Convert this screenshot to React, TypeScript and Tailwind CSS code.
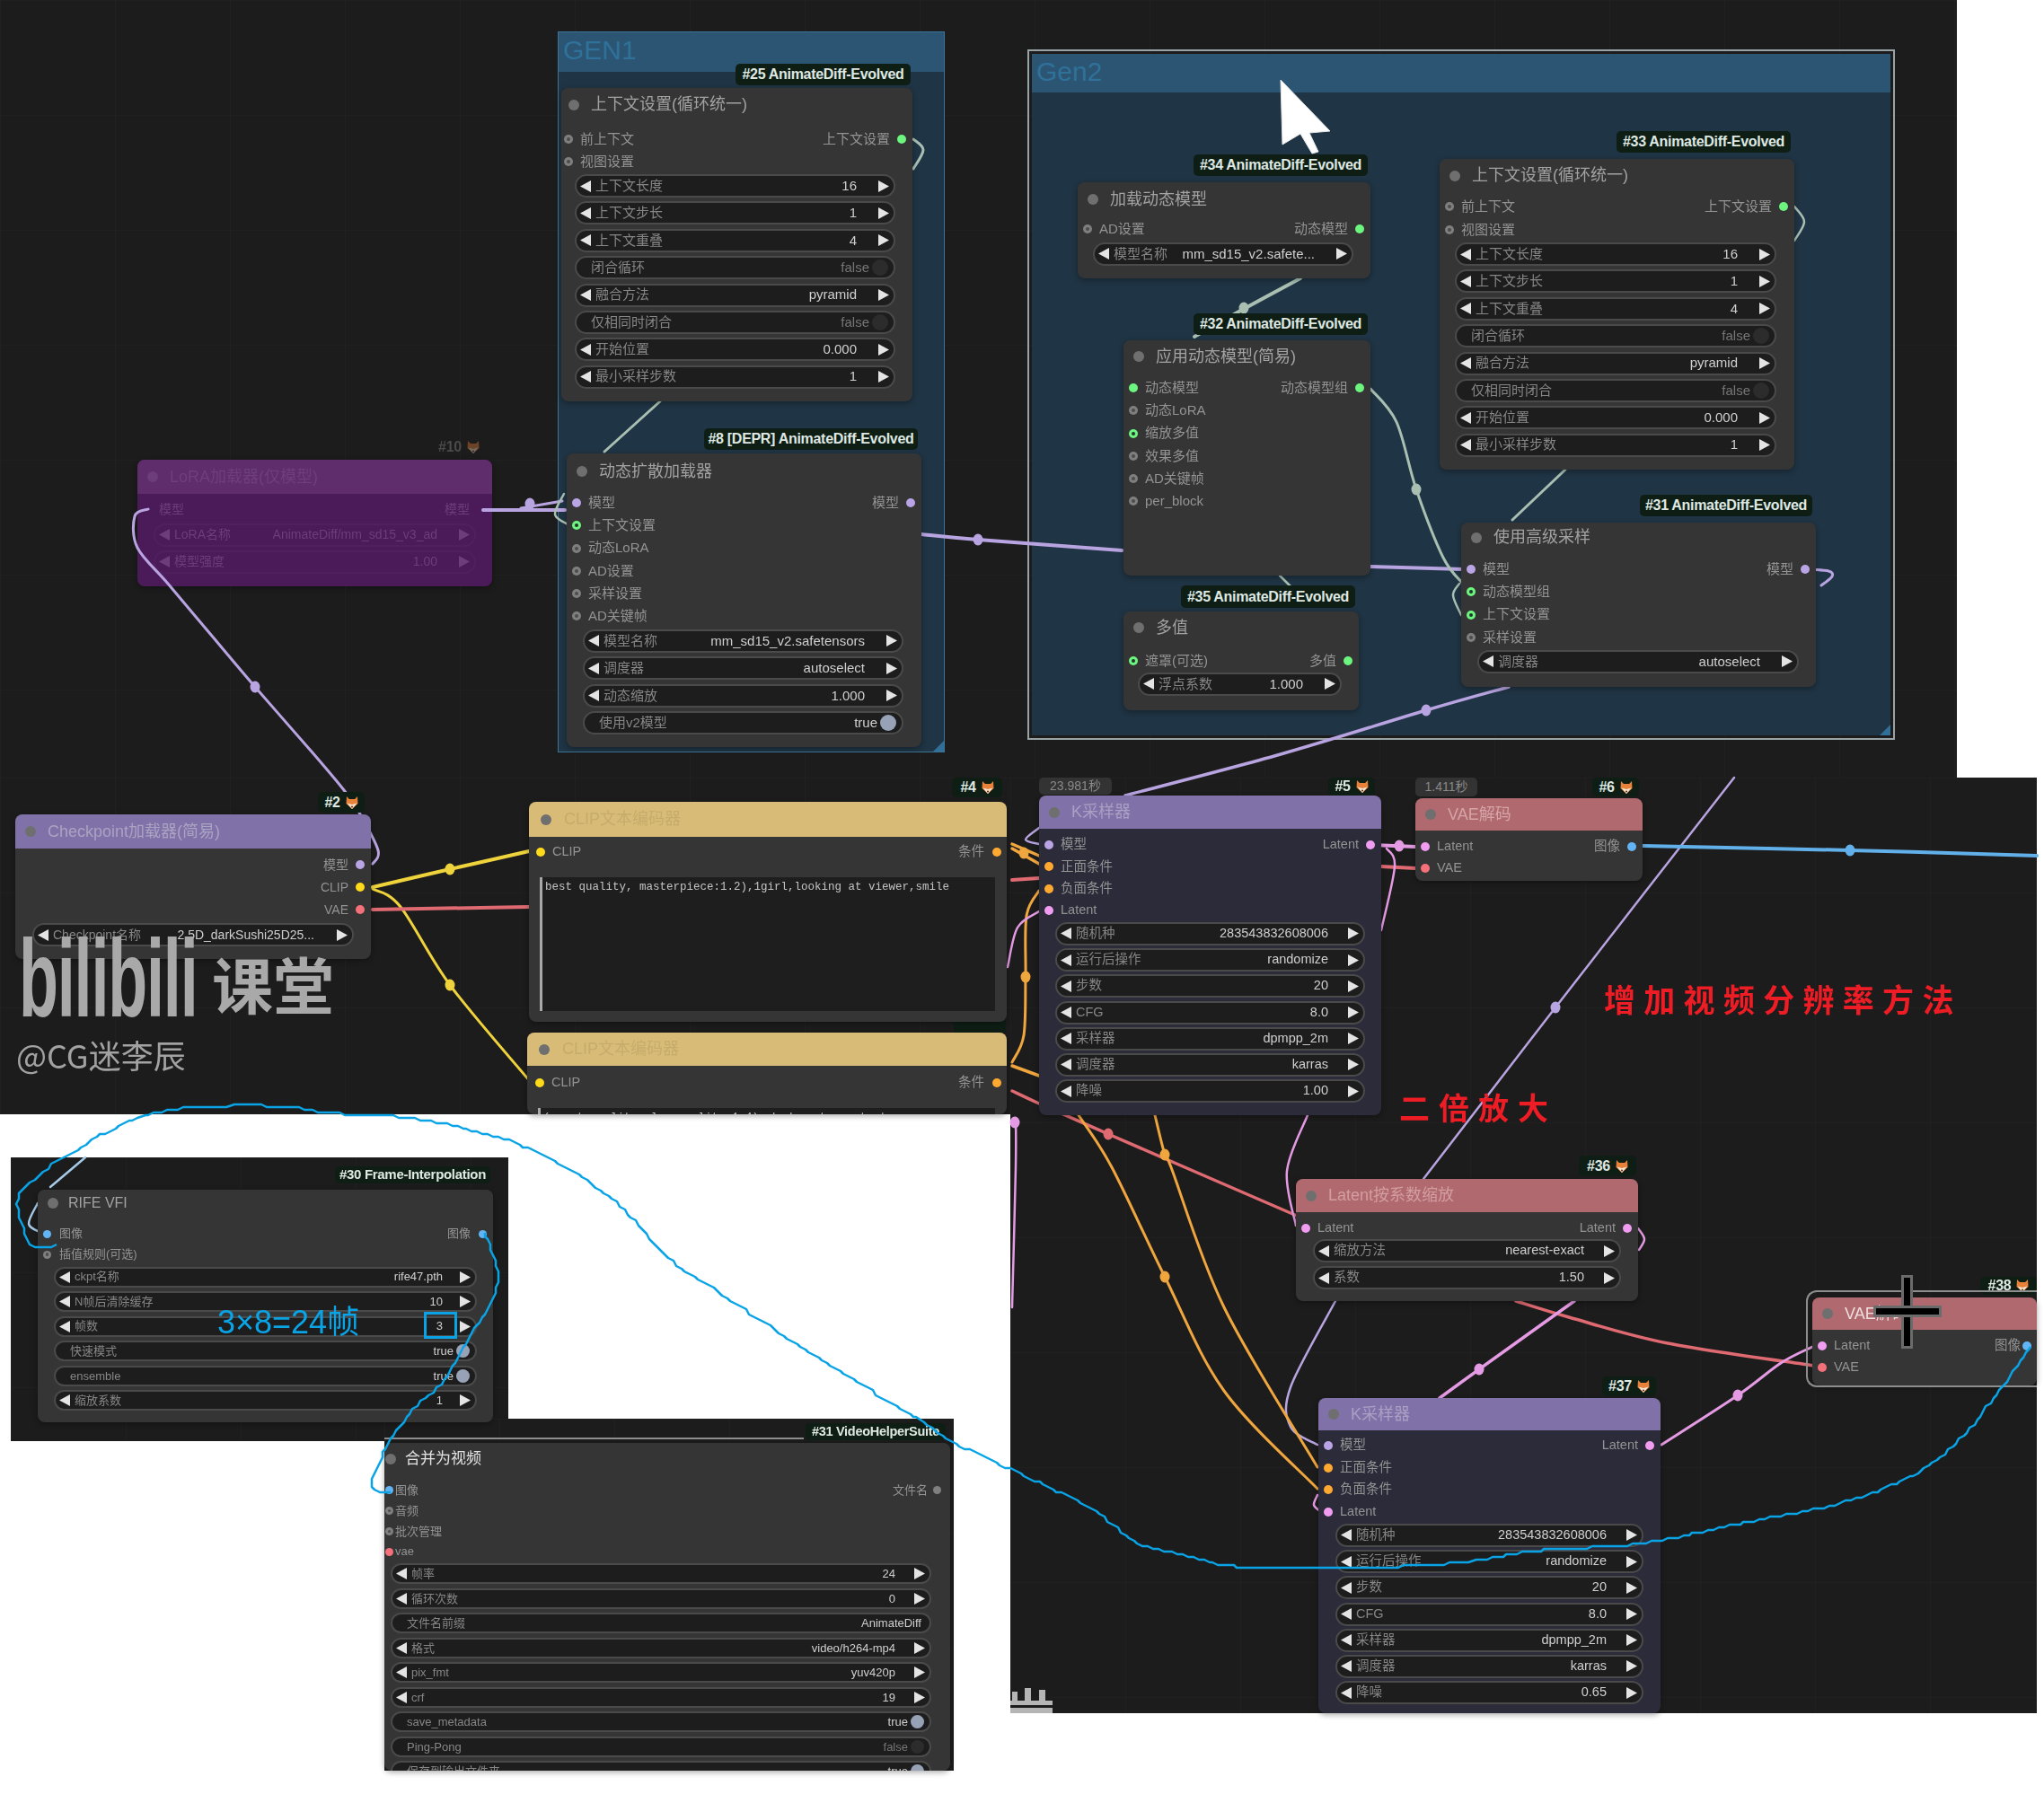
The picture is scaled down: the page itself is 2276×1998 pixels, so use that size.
import React from 'react';

type Slot = [string, string, boolean?];
type W = { k: 'a' | 't' | 's'; l: string; v: string; on?: boolean };
type NodeDef = {
  x: number; y: number; w: number; h: number; title: string; tH?: number; tBg?: string; tc?: string; bg?: string;
  fs?: number; tfs?: number; left?: Slot[]; right?: Slot[]; slotY: number; slotStep?: number;
  widgets?: W[]; widgetY?: number; widgetStep?: number; wh?: number; inset?: number; insetR?: number; vm?: number;
  dotL?: number; textL?: number; dotR?: number; textR?: number; titleDot?: number; titleText?: number;
  muted?: boolean; children?: React.ReactNode;
};

const a = (l: string, v: string): W => ({ k: 'a', l, v });
const t = (l: string, v: string, on: boolean): W => ({ k: 't', l, v, on });
const s = (l: string, v: string): W => ({ k: 's', l, v });

const GRAY = '#7f7f7f', LAV = '#b9a5e6', YEL = '#ffd91a', RED = '#f4717a', GRN = '#6cf57f', PNK = '#f09cf0', ORG = '#ffa931', BLU = '#63b4f4';
const PURPLE = '#8072a8', ROSE = '#b0696e', KBG = '#2b2b3a', CLIPBG = '#d8bb76', CLIPTC = '#c6ab6c', LORA = '#4a1a59';

const ctxWidgets = [
  a('上下文长度', '16'), a('上下文步长', '1'), a('上下文重叠', '4'), t('闭合循环', 'false', false),
  a('融合方法', 'pyramid'), t('仅相同时闭合', 'false', false), a('开始位置', '0.000'), a('最小采样步数', '1'),
];
const kWidgets = (d: string) => [
  a('随机种', '283543832608006'), a('运行后操作', 'randomize'), a('步数', '20'), a('CFG', '8.0'),
  a('采样器', 'dpmpp_2m'), a('调度器', 'karras'), a('降噪', d),
];

const lora: NodeDef = { x: 153, y: 512, w: 395, h: 141, title: 'LoRA加载器(仅模型)', tH: 38, tBg: '#5f2c6c', bg: LORA, tc: '#6f3e7d', muted: true, fs: 14,
  left: [['模型', LORA]], right: [['模型', LORA]], slotY: 568, widgets: [a('LoRA名称', 'AnimateDiff/mm_sd15_v3_ad'), a('模型强度', '1.00')], widgetY: 596, widgetStep: 30, inset: 18, textL: 24 };

const nodes: NodeDef[] = [
  { x: 625, y: 98, w: 391, h: 349, title: '上下文设置(循环统一)', left: [['前上下文', GRAY, true], ['视图设置', GRAY, true]], right: [['上下文设置', GRN]],
    slotY: 155, slotStep: 25, widgets: ctxWidgets, widgetY: 207, inset: 15, insetR: 19, titleDot: 8, titleText: 33, dotL: 3, textL: 21 },
  { x: 631, y: 505, w: 395, h: 327, title: '动态扩散加载器', tH: 40, left: [['模型', LAV], ['上下文设置', GRN, true], ['动态LoRA', GRAY, true], ['AD设置', GRAY, true], ['采样设置', GRAY, true], ['AD关键帧', GRAY, true]], right: [['模型', LAV]],
    slotY: 560, widgets: [a('模型名称', 'mm_sd15_v2.safetensors'), a('调度器', 'autoselect'), a('动态缩放', '1.000'), t('使用v2模型', 'true', true)], widgetY: 714, inset: 18, insetR: 20 },
  { x: 1200, y: 203, w: 326, h: 107, title: '加载动态模型', tH: 38, left: [['AD设置', GRAY, true]], right: [['动态模型', GRN]], slotY: 255, widgets: [a('模型名称', 'mm_sd15_v2.safete...')], widgetY: 283, inset: 17, insetR: 19 },
  { x: 1251, y: 379, w: 275, h: 262, title: '应用动态模型(简易)', tH: 36, left: [['动态模型', GRN], ['动态LoRA', GRAY, true], ['缩放多值', GRN, true], ['效果多值', GRAY, true], ['AD关键帧', GRAY, true], ['per_block', GRAY, true]], right: [['动态模型组', GRN]], slotY: 432 },
  { x: 1603, y: 177, w: 395, h: 346, title: '上下文设置(循环统一)', left: [['前上下文', GRAY, true], ['视图设置', GRAY, true]], right: [['上下文设置', GRN]], slotY: 230, slotStep: 26, widgets: ctxWidgets, widgetY: 283, inset: 17, insetR: 20 },
  { x: 1627, y: 582, w: 395, h: 183, title: '使用高级采样', tH: 33, left: [['模型', LAV], ['动态模型组', GRN, true], ['上下文设置', GRN, true], ['采样设置', GRAY, true]], right: [['模型', LAV]], slotY: 634, widgets: [a('调度器', 'autoselect')], widgetY: 737, inset: 18, insetR: 19 },
  { x: 1251, y: 681, w: 262, h: 110, title: '多值', tH: 36, left: [['遮罩(可选)', GRN, true]], right: [['多值', GRN]], slotY: 736, widgets: [a('浮点系数', '1.000')], widgetY: 762, inset: 16, insetR: 19 },
  { x: 17, y: 907, w: 396, h: 161, title: 'Checkpoint加载器(简易)', tBg: PURPLE, tc: '#aaa3c2', tH: 38, fs: 14, right: [['模型', LAV], ['CLIP', YEL], ['VAE', RED]], slotY: 963, slotStep: 25, widgets: [a('Checkpoint名称', '2.5D_darkSushi25D25...')], widgetY: 1041, inset: 19, insetR: 19, vm: 25 },
  { x: 589, y: 893, w: 532, h: 245, title: 'CLIP文本编码器', tH: 39, tBg: CLIPBG, tc: CLIPTC, fs: 14.5, titleDot: 13, titleText: 39, dotL: 8, textL: 26, dotR: 6, left: [['CLIP', YEL]], right: [['条件', ORG]], slotY: 949, children: (
    <div className="ml-[12px] mr-[13px] mt-[15px] h-[149px] bg-[#1e1e1e] border-l-[3px] border-[#a8a8a8] px-[3px] py-[3px] [font-family:'Liberation_Mono',monospace] text-[12.5px] leading-[16px] text-[#c4c4c4] whitespace-nowrap">best quality, masterpiece:1.2),1girl,looking at viewer,smile</div>
  ) },
  { x: 587, y: 1150, w: 534, h: 91, title: 'CLIP文本编码器', tH: 37, tBg: CLIPBG, tc: CLIPTC, fs: 14.5, titleDot: 13, titleText: 39, dotL: 9, textL: 27, dotR: 6, left: [['CLIP', YEL]], right: [['条件', ORG]], slotY: 1206, children: (
    <div className="ml-[12px] mr-[13px] mt-[15px] h-[60px] bg-[#1e1e1e] border-l-[3px] border-[#a8a8a8] px-[3px] py-[3px] [font-family:'Liberation_Mono',monospace] text-[12.5px] leading-[16px] text-[#c4c4c4] whitespace-nowrap">(worst quality, low quality:1.4), bad anatomy, text</div>
  ) },
  { x: 1157, y: 886, w: 381, h: 356, title: 'K采样器', tH: 37, tBg: PURPLE, tc: '#a9a0c4', bg: KBG, fs: 14.5, left: [['模型', LAV], ['正面条件', ORG], ['负面条件', ORG], ['Latent', PNK]], right: [['Latent', PNK]], slotY: 941, slotStep: 24.4, widgets: kWidgets('1.00'), widgetY: 1040, widgetStep: 29.2, inset: 18, vm: 22 },
  { x: 1576, y: 889, w: 253, h: 92, title: 'VAE解码', tH: 36, tBg: ROSE, tc: '#d5a5a8', fs: 14.5, left: [['Latent', PNK], ['VAE', RED]], right: [['图像', BLU]], slotY: 943, slotStep: 24 },
  { x: 1443, y: 1313, w: 381, h: 136, title: 'Latent按系数缩放', tH: 37, tBg: ROSE, tc: '#d39ea2', fs: 14.5, left: [['Latent', PNK]], right: [['Latent', PNK]], slotY: 1368, widgets: [a('缩放方法', 'nearest-exact'), a('系数', '1.50')], widgetY: 1393, widgetStep: 30, inset: 19, vm: 22 },
  { x: 1468, y: 1557, w: 381, h: 351, title: 'K采样器', tH: 36, tBg: PURPLE, tc: '#a9a0c4', bg: KBG, fs: 14.5, left: [['模型', LAV], ['正面条件', ORG], ['负面条件', ORG], ['Latent', PNK]], right: [['Latent', PNK]], slotY: 1610, slotStep: 24.6, widgets: kWidgets('0.65'), widgetY: 1710, widgetStep: 29.2, inset: 19, vm: 22 },
  { x: 2018, y: 1445, w: 250, h: 98, title: 'VAE解码', tH: 36, tBg: ROSE, tc: '#eedede', fs: 14.5, left: [['Latent', PNK], ['VAE', RED]], right: [['图像', BLU]], slotY: 1499, slotStep: 23.5, dotR: 6, textR: 18 },
  { x: 42, y: 1325, w: 507, h: 259, title: 'RIFE VFI', tH: 30, tfs: 16, fs: 13, titleText: 34, left: [['图像', BLU], ['插值规则(可选)', GRAY, true]], right: [['图像', BLU]], slotY: 1374, slotStep: 23, widgets: [a('ckpt名称', 'rife47.pth'), a('N帧后清除缓存', '10'), a('帧数', '3'), t('快速模式', 'true', true), t('ensemble', 'true', true), a('缩放系数', '1')], widgetY: 1422, widgetStep: 27.6, wh: 23, inset: 18, vm: 19 },
  { x: 428, y: 1607, w: 630, h: 365, title: '合并为视频', tH: 36, tfs: 17, tc: '#e2e2e2', fs: 13, dotL: 1, textL: 12, dotR: 10, textR: 25, titleDot: 1, titleText: 23, left: [['图像', BLU], ['音频', GRAY, true], ['批次管理', GRAY, true], ['vae', RED]], right: [['文件名', GRAY]], slotY: 1660, slotStep: 22.7,
    widgets: [a('帧率', '24'), a('循环次数', '0'), s('文件名前缀', 'AnimateDiff'), a('格式', 'video/h264-mp4'), a('pix_fmt', 'yuv420p'), a('crf', '19'), t('save_metadata', 'true', true), t('Ping-Pong', 'false', false), t('保存到输出文件夹', 'true', true)], widgetY: 1753, widgetStep: 27.5, wh: 23, inset: 7, insetR: 21, vm: 21 },
];

type Badge = { x: number; y: number; w: number; h: number; text: string; fox?: boolean; fs?: number; dim?: boolean; time?: boolean };
const badges: Badge[] = [
  { x: 819, y: 71, w: 195, h: 24, text: '#25 AnimateDiff-Evolved' },
  { x: 784, y: 477, w: 238, h: 24, text: '#8 [DEPR] AnimateDiff-Evolved' },
  { x: 1329, y: 172, w: 194, h: 24, text: '#34 AnimateDiff-Evolved' },
  { x: 1329, y: 349, w: 194, h: 24, text: '#32 AnimateDiff-Evolved' },
  { x: 1800, y: 146, w: 194, h: 24, text: '#33 AnimateDiff-Evolved' },
  { x: 1826, y: 551, w: 192, h: 24, text: '#31 AnimateDiff-Evolved' },
  { x: 1315, y: 652, w: 194, h: 25, text: '#35 AnimateDiff-Evolved' },
  { x: 354, y: 882, w: 52, h: 23, text: '#2', fox: true },
  { x: 1060, y: 866, w: 56, h: 22, text: '#4', fox: true },
  { x: 1479, y: 866, w: 52, h: 20, text: '#5', fox: true },
  { x: 1773, y: 866, w: 52, h: 21, text: '#6', fox: true },
  { x: 1758, y: 1287, w: 64, h: 23, text: '#36', fox: true },
  { x: 1784, y: 1533, w: 60, h: 22, text: '#37', fox: true },
  { x: 2205, y: 1422, w: 63, h: 20, text: '#38', fox: true },
  { x: 373, y: 1299, w: 173, h: 19, text: '#30 Frame-Interpolation', fs: 15 },
  { x: 897, y: 1585, w: 156, h: 19, text: '#31 VideoHelperSuite', fs: 14.5 },
  { x: 482, y: 487, w: 58, h: 22, text: '#10', fox: true, dim: true },
  { x: 1157, y: 866, w: 81, h: 19, text: '23.981秒', time: true },
  { x: 1576, y: 866, w: 69, h: 21, text: '1.411秒', time: true },
];

type P = [number, number];
type Wire = { c: string; w: number; pts: P[]; dots?: P[] };
const LV = '#b8a4e0', SG = '#a9bfb2', YL = '#efd33c', RD = '#df6a72', OR = '#f0a63e', PK = '#e59ae4', BL = '#62b0ea';
const wires: Wire[] = [
  { c: LV, w: 3, pts: [[165, 567], [150, 575], [153, 610], [187, 650], [235, 707], [284, 765], [346, 836], [383, 880], [400, 905], [421, 947], [415, 962]], dots: [[284, 765]] },
  { c: LV, w: 4, pts: [[538, 568], [629, 568]] },
  { c: LV, w: 3, pts: [[580, 566], [626, 558]], dots: [[590, 561]] },
  { c: LV, w: 4, pts: [[1026, 595], [1089, 601], [1249, 613]], dots: [[1089, 601]] },
  { c: LV, w: 4, pts: [[1526, 631], [1629, 634]] },
  { c: LV, w: 3, pts: [[2012, 634], [2036, 636], [2040, 642], [2028, 652]] },
  { c: LV, w: 3.5, pts: [[1680, 765], [1588, 791], [1426, 840], [1253, 886]], dots: [[1588, 791]] },
  { c: LV, w: 2.5, pts: [[1157, 922], [1142, 935], [1157, 940]] },
  { c: LV, w: 2.5, pts: [[1487, 1449], [1437, 1545], [1437, 1589], [1467, 1609]] },
  { c: LV, w: 2.5, pts: [[1931, 866], [1732, 1122], [1585, 1313]], dots: [[1732, 1122]] },
  { c: SG, w: 3, pts: [[1017, 155], [1028, 167], [1017, 188]] },
  { c: SG, w: 3, pts: [[735, 447], [673, 503]] },
  { c: SG, w: 2.5, pts: [[628, 550], [618, 573], [634, 585]] },
  { c: SG, w: 4, pts: [[1448, 310], [1385, 344], [1330, 375]], dots: [[1385, 343]] },
  { c: SG, w: 3, pts: [[1526, 433], [1555, 470], [1577, 545], [1607, 621], [1629, 650]], dots: [[1577, 545]] },
  { c: SG, w: 2.5, pts: [[1625, 650], [1618, 663], [1627, 685]] },
  { c: SG, w: 2.5, pts: [[1998, 230], [2009, 247], [1998, 268]] },
  { c: SG, w: 3, pts: [[1743, 523], [1684, 579]] },
  { c: SG, w: 2.5, pts: [[1425, 641], [1442, 658]] },
  { c: YL, w: 4, pts: [[415, 988], [501, 968], [589, 948]], dots: [[501, 968]] },
  { c: YL, w: 3, pts: [[415, 990], [446, 1010], [501, 1097], [589, 1203]], dots: [[501, 1097]] },
  { c: RD, w: 4, pts: [[415, 1013], [589, 1010]] },
  { c: RD, w: 4, pts: [[1127, 980], [1157, 978]] },
  { c: RD, w: 4, pts: [[1538, 965], [1576, 967]] },
  { c: RD, w: 3.5, pts: [[1127, 1215], [1157, 1229], [1234, 1263], [1444, 1354]], dots: [[1234, 1263]] },
  { c: RD, w: 3.5, pts: [[1688, 1449], [1747, 1467], [1857, 1496], [2020, 1521]] },
  { c: OR, w: 3.5, pts: [[1127, 940], [1157, 953]], dots: [[1140, 950]] },
  { c: OR, w: 3.5, pts: [[1127, 945], [1157, 962]] },
  { c: OR, w: 3, pts: [[1157, 992], [1143, 1020], [1142, 1088], [1140, 1153], [1127, 1183]], dots: [[1142, 1088]] },
  { c: OR, w: 3.5, pts: [[1127, 1187], [1157, 1198]] },
  { c: OR, w: 3, pts: [[1286, 1242], [1297, 1286], [1304, 1300], [1363, 1456], [1467, 1634]], dots: [[1297, 1286]] },
  { c: OR, w: 3, pts: [[1201, 1242], [1238, 1300], [1297, 1422], [1363, 1549], [1467, 1658]], dots: [[1297, 1422]] },
  { c: PK, w: 4, pts: [[1528, 941], [1576, 943]], dots: [[1558, 942]] },
  { c: PK, w: 2.5, pts: [[1544, 945], [1553, 965], [1538, 1036]] },
  { c: PK, w: 2.5, pts: [[1456, 1242], [1433, 1304], [1443, 1365]] },
  { c: PK, w: 2.5, pts: [[1122, 1077], [1133, 1033], [1157, 1015]] },
  { c: PK, w: 2.5, pts: [[1131, 1245], [1131, 1300], [1127, 1456]], dots: [[1130, 1250]] },
  { c: PK, w: 2.5, pts: [[1824, 1368], [1831, 1380], [1825, 1392]] },
  { c: PK, w: 3.5, pts: [[1753, 1449], [1647, 1525], [1603, 1557]], dots: [[1647, 1525]] },
  { c: PK, w: 2.5, pts: [[1467, 1665], [1463, 1676], [1470, 1683]] },
  { c: PK, w: 3, pts: [[1850, 1609], [1935, 1554], [1983, 1518], [2018, 1500]], dots: [[1935, 1554]] },
  { c: BL, w: 4, pts: [[1829, 942], [2060, 947], [2268, 953]], dots: [[2060, 947]] },
  { c: '#a6cbe8', w: 2.5, pts: [[95, 1289], [56, 1322]] },
  { c: '#a6cbe8', w: 2.5, pts: [[42, 1340], [32, 1363], [46, 1373]] },
];

const blueA: P[] = [[435, 1663], [414, 1655], [425, 1622], [456, 1574], [491, 1541], [523, 1490], [554, 1429], [540, 1373]];
const blueB: P[] = [[63, 1387], [39, 1388], [28, 1373], [20, 1335], [49, 1304], [95, 1274], [123, 1259], [161, 1243], [218, 1233], [309, 1232], [372, 1240], [456, 1245], [526, 1259], [589, 1279], [653, 1315], [695, 1348], [744, 1401], [800, 1439], [877, 1490], [940, 1531], [1021, 1579], [1060, 1605], [1124, 1636], [1172, 1658], [1220, 1683], [1267, 1719], [1312, 1730], [1363, 1743], [1415, 1746], [1526, 1746], [1636, 1739], [1710, 1727], [1828, 1719], [1931, 1698], [2042, 1676], [2130, 1643], [2182, 1603], [2226, 1549], [2261, 1500]];

function smooth(p: P[]): string {
  if (p.length < 3) return `M${p[0][0]} ${p[0][1]} L${p[p.length - 1][0]} ${p[p.length - 1][1]}`;
  let d = `M${p[0][0]} ${p[0][1]}`;
  for (let i = 0; i < p.length - 1; i++) {
    const p0 = p[Math.max(i - 1, 0)], p1 = p[i], p2 = p[i + 1], p3 = p[Math.min(i + 2, p.length - 1)];
    d += ` C${p1[0] + (p2[0] - p0[0]) / 6} ${p1[1] + (p2[1] - p0[1]) / 6} ${p2[0] - (p3[0] - p1[0]) / 6} ${p2[1] - (p3[1] - p1[1]) / 6} ${p2[0]} ${p2[1]}`;
  }
  return d;
}

// hand-drawn look: sample the spline and snap it to a coarse pixel grid
function jag(p: P[]): string {
  let d = '';
  for (let i = 0; i < p.length - 1; i++) {
    const p0 = p[Math.max(i - 1, 0)], p1 = p[i], p2 = p[i + 1], p3 = p[Math.min(i + 2, p.length - 1)];
    const len = Math.hypot(p2[0] - p1[0], p2[1] - p1[1]);
    const n = Math.max(2, Math.round(len / 6));
    for (let k = 0; k < n; k++) {
      const u = k / n, v = u * u, w = v * u;
      const x = 0.5 * (2 * p1[0] + (p2[0] - p0[0]) * u + (2 * p0[0] - 5 * p1[0] + 4 * p2[0] - p3[0]) * v + (3 * p1[0] - p0[0] - 3 * p2[0] + p3[0]) * w);
      const y = 0.5 * (2 * p1[1] + (p2[1] - p0[1]) * u + (2 * p0[1] - 5 * p1[1] + 4 * p2[1] - p3[1]) * v + (3 * p1[1] - p0[1] - 3 * p2[1] + p3[1]) * w);
      d += `${d ? 'L' : 'M'}${Math.round(x / 3) * 3} ${Math.round(y / 3) * 3} `;
    }
  }
  const e = p[p.length - 1];
  return `${d}L${e[0]} ${e[1]}`;
}

function Fox({ dim }: { dim?: boolean }) {
  return (
    <svg width="14" height="16" viewBox="0 0 14 16" className={dim ? 'opacity-40' : ''}>
      <path d="M1 1 L4 4 H10 L13 1 L13.5 9 L7 15 L0.5 9 Z" fill="#e8813a" />
      <path d="M1.5 8.5 L7 10 L12.5 8.5 L7 15 Z" fill="#f6e6d4" />
      <circle cx="7" cy="12.5" r="1" fill="#5b2a10" />
    </svg>
  );
}

function Dot({ c, ring, size }: { c: string; ring?: boolean; size: number }) {
  return (
    <span className="shrink-0 rounded-full flex items-center justify-center" style={{ width: size, height: size, background: c }}>
      {ring && <span className={`rounded-full ${c === GRAY ? 'bg-[#4c4c4c]' : 'bg-[#22352a]'}`} style={{ width: size * 0.4, height: size * 0.4 }} />}
    </span>
  );
}

function Arrow({ dir, muted }: { dir: 'l' | 'r'; muted?: boolean }) {
  return (
    <svg width="12" height="13" viewBox="0 0 12 13" className="shrink-0">
      <path d={dir === 'l' ? 'M0 6.5 L12 0 V13 Z' : 'M12 6.5 L0 0 V13 Z'} fill={muted ? '#6d3d7b' : '#e4e4e4'} />
    </svg>
  );
}

function Widget({ w, h, muted, fs, mt, vm }: { w: W; h: number; muted?: boolean; fs: number; mt: number; vm: number }) {
  const lab = muted ? '#6d3d7b' : '#868686';
  const val = muted ? '#6d3d7b' : w.k === 't' && !w.on ? '#767676' : '#cfcfcf';
  return (
    <div
      className={`flex items-center rounded-full border-2 shrink-0 whitespace-nowrap overflow-hidden ${muted ? 'border-[#55256380] bg-[#4a1a59]' : 'border-[#4a4a4a] bg-[#1d1d1d]'}`}
      style={{ height: h, marginTop: mt, fontSize: fs }}
    >
      {w.k === 'a' ? (
        <div className="flex items-center w-full pl-[4px] pr-[5px]">
          <Arrow dir="l" muted={muted} />
          <span className="ml-[5px]" style={{ color: lab }}>{w.l}</span>
          <span className="ml-auto" style={{ color: val, marginRight: vm }}>{w.v}</span>
          <Arrow dir="r" muted={muted} />
        </div>
      ) : (
        <div className="flex items-center w-full pl-[16px] pr-[6px]">
          <span style={{ color: lab }}>{w.l}</span>
          <span className="ml-auto mr-[3px]" style={{ color: val }}>{w.v}</span>
          {w.k === 't' && (
            <span className={`rounded-full shrink-0 ${w.on ? 'bg-[#98a2b6]' : 'bg-[#2c2c2c]'}`} style={{ width: h - 8, height: h - 8 }} />
          )}
        </div>
      )}
    </div>
  );
}

function Node({ n }: { n: NodeDef }) {
  const step = n.slotStep ?? 25.3, wh = n.wh ?? 26, wStep = n.widgetStep ?? 30.4, tH = n.tH ?? 37, fs = n.fs ?? 15;
  const left = n.left ?? [], right = n.right ?? [];
  const rows = Math.max(left.length, right.length);
  const slotMt = n.slotY - n.y - tH - step / 2;
  const slotEnd = n.slotY - step / 2 + rows * step;
  const dotL = n.dotL ?? 6, textL = n.textL ?? 24, dotR = n.dotR ?? 7, textR = n.textR ?? 25, dot = fs < 14 ? 9 : 10;
  const txt = n.muted ? '#6d3d7b' : '#939393';
  const td = n.titleDot ?? 11, tt = n.titleText ?? 36;
  return (
    <div
      className="absolute rounded-[8px] overflow-hidden flex flex-col shadow-[0_2px_6px_#00000055]"
      style={{ left: n.x, top: n.y, width: n.w, height: n.h, background: n.bg ?? '#353535' }}
    >
      <div className="flex items-center shrink-0" style={{ height: tH, background: n.tBg ?? '#353535', color: n.tc ?? '#a2a2a2', fontSize: n.tfs ?? 18, paddingLeft: td }}>
        <span className={`rounded-full shrink-0 ${n.muted ? 'bg-[#6d3d7b]' : 'bg-[#6f6f6f]'}`} style={{ width: 12, height: 12 }} />
        <span className="whitespace-nowrap" style={{ marginLeft: tt - td - 12 }}>{n.title}</span>
      </div>
      <div className="flex justify-between shrink-0" style={{ marginTop: slotMt, fontSize: fs, color: txt }}>
        <div className="flex flex-col">
          {left.map((r, i) => (
            <div key={i} className="flex items-center whitespace-nowrap" style={{ height: step, paddingLeft: dotL }}>
              <Dot c={r[1]} ring={r[2]} size={dot} />
              <span style={{ marginLeft: textL - dotL - dot }}>{r[0]}</span>
            </div>
          ))}
        </div>
        <div className="flex flex-col">
          {right.map((r, i) => (
            <div key={i} className="flex items-center justify-end whitespace-nowrap" style={{ height: step, paddingRight: dotR }}>
              <span style={{ marginRight: textR - dotR - dot }}>{r[0]}</span>
              <Dot c={r[1]} ring={r[2]} size={dot} />
            </div>
          ))}
        </div>
      </div>
      {n.widgets && (
        <div className="flex flex-col shrink-0" style={{ paddingLeft: n.inset, paddingRight: n.insetR ?? n.inset }}>
          {n.widgets.map((w, i) => (
            <Widget key={i} w={w} h={wh} muted={n.muted} fs={fs} vm={n.vm ?? 24} mt={i === 0 ? n.widgetY! - wh / 2 - slotEnd : wStep - wh} />
          ))}
        </div>
      )}
      {n.children}
    </div>
  );
}

function BadgeEl({ b }: { b: Badge }) {
  return (
    <div
      className={`absolute rounded-[5px] flex items-center justify-center gap-[6px] whitespace-nowrap ${b.time ? 'bg-[#333333] text-[#8a8a8a] font-normal' : b.dim ? 'text-[#4a4a4a] font-bold' : 'bg-[#0e1e15] text-[#dfe8e2] font-bold'}`}
      style={{ left: b.x, top: b.y, width: b.w, height: b.h, fontSize: b.fs ?? (b.time ? 14 : 16), letterSpacing: b.time ? 0 : -0.3 }}
    >
      <span>{b.text}</span>
      {b.fox && <Fox dim={b.dim} />}
    </div>
  );
}

function Group({ x, y, w, h, hH, title, outer }: { x: number; y: number; w: number; h: number; hH: number; title: string; outer?: boolean }) {
  return (
    <div
      className={`absolute flex flex-col ${outer ? 'border-[2px] border-[#99a3a6] p-[3px]' : 'border border-[#3c7396]'}`}
      style={{ left: x, top: y, width: w, height: h }}
    >
      <div className="relative flex flex-col grow bg-[#1f3444]">
        <div className="bg-[#2c5573] flex items-center pl-[5px] pb-[4px] text-[#2f7199] text-[30px] leading-none shrink-0" style={{ height: hH }}>{title}</div>
        <div className="absolute right-0 bottom-0 w-0 h-0 border-l-[12px] border-l-transparent border-b-[12px] border-b-[#2f6f98]" />
      </div>
    </div>
  );
}

const gridBg = 'bg-[#1c1c1c] bg-[linear-gradient(#ffffff05_1px,transparent_1px),linear-gradient(90deg,#ffffff05_1px,transparent_1px)] bg-[size:128px_128px]';

export default function App() {
  return (
    <div className="relative w-[2276px] h-[1998px] bg-white overflow-hidden [font-family:'Liberation_Sans','Noto_Sans_CJK_SC',sans-serif]">
      {/* captured canvas pieces */}
      <div className={`absolute left-0 top-0 w-[2179px] h-[866px] ${gridBg}`} />
      <div className={`absolute left-0 top-[866px] w-[1125px] h-[375px] ${gridBg}`} />
      <div className={`absolute left-[1125px] top-[866px] w-[1143px] h-[1042px] ${gridBg}`} />
      <div className={`absolute left-[12px] top-[1289px] w-[554px] h-[316px] ${gridBg}`} />
      <div className={`absolute left-[428px] top-[1580px] w-[634px] h-[392px] ${gridBg}`} />

      <div className="absolute inset-0 blur-[0.6px]">
        <Group x={621} y={35} w={431} h={803} hH={44} title="GEN1" />
        <Group x={1144} y={55} w={966} h={769} hH={43} title="Gen2" outer />

        <Node n={lora} />

        <svg className="absolute left-0 top-0" width="2276" height="1998" viewBox="0 0 2276 1998" fill="none">
          {wires.map((w, i) => (
            <g key={i}>
              <path d={smooth(w.pts)} stroke={w.c} strokeWidth={w.w} strokeLinecap="round" />
              {w.dots?.map((d, j) => <ellipse key={j} cx={d[0]} cy={d[1]} rx="5.5" ry="6.5" fill={w.c} />)}
            </g>
          ))}
        </svg>

        <div className="absolute left-[1062px] top-[1134px] w-[58px] h-[16px] bg-[#0e1e15]" />
        {nodes.map((n, i) => <Node key={i} n={n} />)}
        {badges.map((b, i) => <BadgeEl key={i} b={b} />)}

        {/* selected outline of #38 and header rule of #31 */}
        <div className="absolute left-[2011px] top-[1437px] w-[257px] h-[108px] border-2 border-r-0 border-[#8d8d8d] rounded-l-[12px]" />
        <div className="absolute left-[428px] top-[1601px] w-[467px] h-[2px] bg-[#8d8d8d]" />
      </div>

      {/* mouse cursor */}
      <svg className="absolute left-[1420px] top-[84px]" width="68" height="92" viewBox="0 0 68 92">
        <path d="M6 5 L8 77 L28 65 L41 87 L48 85 L38 64 L61 62 Z" fill="#ffffff" stroke="#e8e8e8" strokeWidth="1" />
      </svg>

      {/* crosshair cursor */}
      <div className="absolute left-[2117px] top-[1420px] w-[13px] h-[82px] bg-black border-[3px] border-[#6b6b6b]" />
      <div className="absolute left-[2086px] top-[1454px] w-[76px] h-[13px] bg-black border-[3px] border-[#6b6b6b]" />

      {/* watermark */}
      <div className="absolute left-[21px] top-[1020px] origin-left scale-x-[0.59] text-[122px] leading-[140px] font-bold text-[#a9a9a9] tracking-[-2px] whitespace-nowrap">bilibili</div>
      <div className="absolute left-[236px] top-[1050px] text-[68px] leading-[100px] font-bold text-[#a9a9a9] whitespace-nowrap">课堂</div>
      <div className="absolute left-[18px] top-[1152px] text-[36px] leading-[44px] text-[#a2a2a2] whitespace-nowrap [font-family:'Noto_Sans_CJK_SC',sans-serif]">@CG迷李辰</div>

      {/* fragment at the lower edge of the right piece */}
      <svg className="absolute left-[1125px] top-[1880px]" width="48" height="28" viewBox="0 0 48 28">
        <path d="M2 4 H8 V14 H2 Z M16 0 H23 V14 H16 Z M32 2 H39 V14 H32 Z M0 14 H47 V28 H0 Z" fill="#b5b5b5" />
        <path d="M0 19 H47 V22 H0 Z" fill="#1c1c1c" />
      </svg>

      {/* red notes */}
      <div className="absolute left-[1786px] top-[1092px] text-[35px] leading-[46px] font-bold text-[#ee1c25] tracking-[9.3px] whitespace-nowrap">增加视频分辨率方法</div>
      <div className="absolute left-[1558px] top-[1212px] text-[34px] leading-[46px] font-bold text-[#ee1c25] tracking-[10px] whitespace-nowrap">二倍放大</div>

      {/* blue hand notes */}
      <svg className="absolute left-0 top-0 pointer-events-none" width="2276" height="1998" viewBox="0 0 2276 1998" fill="none">
        <path d={jag(blueA)} stroke="#0aa4e6" strokeWidth="2.5" strokeLinejoin="round" />
        <path d={jag(blueB)} stroke="#0aa4e6" strokeWidth="2.5" strokeLinejoin="round" />
      </svg>
      <div className="absolute left-[472px] top-[1461px] w-[37px] h-[30px] border-[3px] border-[#0aa4e6]" />
      <div className="absolute left-[242px] top-[1450px] text-[36px] leading-[46px] text-[#0aa4e6] whitespace-nowrap">3×8=24帧</div>
    </div>
  );
}
